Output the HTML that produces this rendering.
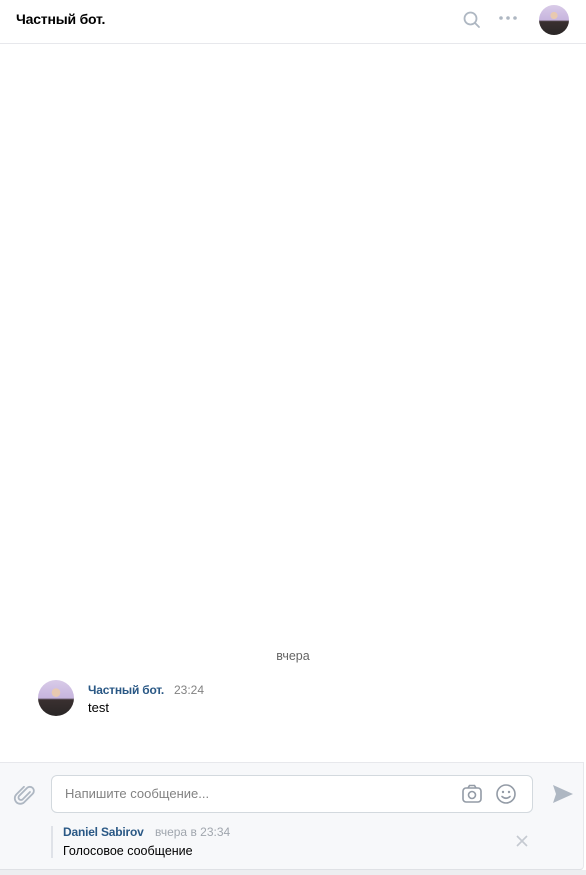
<!DOCTYPE html>
<html><head><meta charset="utf-8"><style>
*{margin:0;padding:0;box-sizing:border-box}
body{width:586px;height:875px;background:#fff;font-family:"Liberation Sans","Noto Sans CJK SC",sans-serif;position:relative;overflow:hidden;font-size:13px}
.hdr{position:absolute;left:0;top:0;width:586px;height:44px;border-bottom:1px solid #e7e8ec;background:#fff}
.hdr .t{position:absolute;left:16px;top:11px;font-weight:bold;font-size:14px;color:#000;letter-spacing:-0.2px}
.av{border-radius:50%;background:radial-gradient(circle at 50% 35%,#e8c9b0 0 14%,transparent 15%),linear-gradient(180deg,#d9cbe8 0,#c7b5de 50%,#3a3030 55%,#2a2626 100%);position:absolute}
.date{position:absolute;top:649px;left:0;width:586px;text-align:center;color:#656565;font-size:12.5px}
.name{position:absolute;left:88px;top:683px;color:#2a5885;font-weight:bold;font-size:12px;letter-spacing:-0.2px}
.time{position:absolute;left:174px;top:683px;color:#828282;font-size:12px}
.msg{position:absolute;left:88px;top:700px;font-size:13px;color:#000}
.bot{position:absolute;left:0;top:762px;width:584px;height:108px;background:#f7f8fa;border-top:1px solid #e7e8ec;border-bottom:1px solid #dfe1e5;border-right:1px solid #e7e8ec;border-bottom-right-radius:4px}
.inp{position:absolute;left:51px;top:775px;width:482px;height:38px;background:#fff;border:1px solid #d3d9de;border-radius:6px}
.inp span{position:absolute;left:13px;top:10px;color:#828282;font-size:13px}
.q{position:absolute;left:51px;top:826px;height:32px;border-left:2px solid #dfe2e8}
</style></head><body>
<div class="hdr"><div class="t">Частный бот.</div>
<svg style="position:absolute;left:462px;top:10px" width="20" height="20" viewBox="0 0 20 20"><circle cx="8.5" cy="8.5" r="6" fill="none" stroke="#aeb7c2" stroke-width="1.8"/><line x1="13" y1="13" x2="17" y2="17" stroke="#aeb7c2" stroke-width="1.8" stroke-linecap="round"/></svg>
<svg style="position:absolute;left:498px;top:15px" width="20" height="6"><circle cx="3" cy="3" r="1.8" fill="#aeb7c2"/><circle cx="10" cy="3" r="1.8" fill="#aeb7c2"/><circle cx="17" cy="3" r="1.8" fill="#aeb7c2"/></svg>
<div class="av" style="left:539px;top:5px;width:30px;height:30px"></div>
</div>
<div class="date">вчера</div>
<div class="av" style="left:38px;top:680px;width:36px;height:36px"></div>
<div class="name">Частный бот.</div><div class="time">23:24</div>
<div class="msg">test</div>
<div class="bot"></div>
<svg style="position:absolute;left:13px;top:783px" width="24" height="24" viewBox="0 0 24 24"><path d="M17 9l-7.5 7.5a2.5 2.5 0 01-3.5-3.5L14 5a4 4 0 015.7 5.7l-8.5 8.5a5.5 5.5 0 01-7.8-7.8L11 3.8" fill="none" stroke="#aeb7c2" stroke-width="1.8" stroke-linecap="round"/></svg>
<div class="inp"><span>Напишите сообщение...</span>
<svg style="position:absolute;left:409px;top:7px" width="22" height="22" viewBox="0 0 22 22"><rect x="2" y="5" width="18" height="14" rx="3" fill="none" stroke="#939ba6" stroke-width="1.6"/><path d="M7 5l1.5-2.5h5L15 5" fill="none" stroke="#939ba6" stroke-width="1.6"/><circle cx="11" cy="12" r="3.5" fill="none" stroke="#939ba6" stroke-width="1.6"/></svg>
<svg style="position:absolute;left:443px;top:7px" width="22" height="22" viewBox="0 0 22 22"><circle cx="11" cy="11" r="9" fill="none" stroke="#939ba6" stroke-width="1.6"/><circle cx="8" cy="9" r="1.2" fill="#939ba6"/><circle cx="14" cy="9" r="1.2" fill="#939ba6"/><path d="M7 13.5q4 3.5 8 0" fill="none" stroke="#939ba6" stroke-width="1.6" stroke-linecap="round"/></svg>
</div>
<svg style="position:absolute;left:551px;top:783px" width="24" height="22" viewBox="0 0 24 22"><path d="M2 2l20 9-20 9 3-9z" fill="#aeb7c2"/></svg>
<div class="q"></div>
<div style="position:absolute;left:63px;top:825px;color:#2a5885;font-weight:bold;font-size:12px;letter-spacing:-0.2px">Daniel Sabirov</div>
<div style="position:absolute;left:155px;top:825px;color:#a0a6ae;font-size:12px">вчера в 23:34</div>
<div style="position:absolute;left:63px;top:844px;color:#000;font-size:12.5px">Голосовое сообщение</div>
<svg style="position:absolute;left:516px;top:835px" width="12" height="12"><path d="M1 1l10 10M11 1L1 11" stroke="#c5cad1" stroke-width="1.6"/></svg>
<div style="position:absolute;left:0;top:870px;width:586px;height:5px;background:#edeef0"></div>
</body></html>
